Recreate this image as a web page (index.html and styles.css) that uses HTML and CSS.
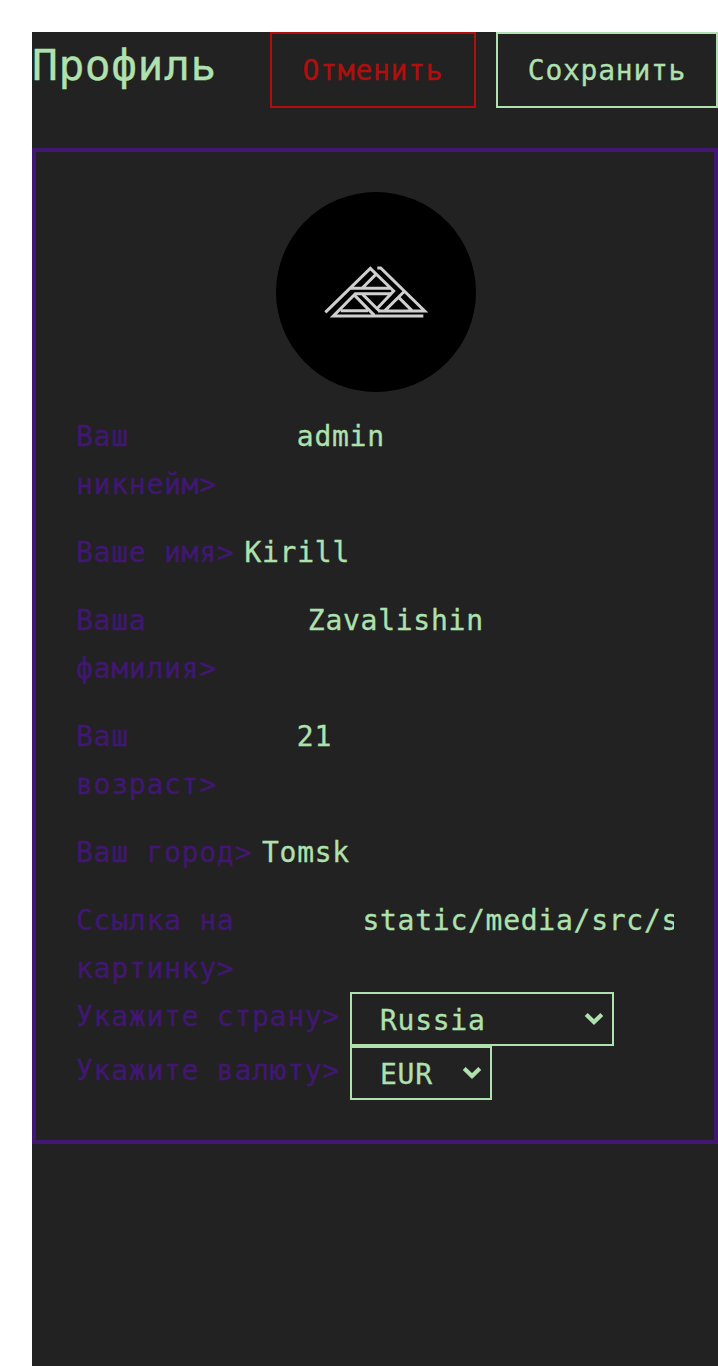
FILE: index.html
```html
<!DOCTYPE html>
<html lang="ru">
<head>
<meta charset="utf-8">
<title>Профиль</title>
<link rel="stylesheet" href="styles.css">
</head>
<body>
<main class="page">
  <header class="header">
    <h1 class="title">Профиль</h1>
    <div class="actions">
      <button class="btn btn-cancel">Отменить</button>
      <button class="btn btn-save">Сохранить</button>
    </div>
  </header>
  <section class="card">
    <svg class="avatar" viewBox="276 192 200 200" aria-label="avatar">
      <circle cx="376" cy="292" r="100" fill="#000"/>
      <g transform="translate(310 250) scale(.33333)" fill="none" stroke="#cfcfcf" stroke-width="9">
        <path d="M46 187L181 55L251 123L200 177"/>
        <path d="M197 74L157 114M122 115H241M245 131H136L70 198H340"/>
        <path d="M134 136L193 196M158 133L208 183M92 182H174"/>
        <path d="M202 54H212L344 183H204M281 126L225 182M266 142L306 182"/>
      </g>
    </svg>
    <div class="fields">
      <div class="field"><span class="label">Ваш<br>никнейм&gt;</span><span class="value after-wide">admin</span></div>
      <div class="field"><span class="label">Ваше имя&gt;</span><span class="value">Kirill</span></div>
      <div class="field"><span class="label">Ваша<br>фамилия&gt;</span><span class="value after-wider">Zavalishin</span></div>
      <div class="field"><span class="label">Ваш<br>возраст&gt;</span><span class="value after-wide">21</span></div>
      <div class="field"><span class="label">Ваш город&gt;</span><span class="value">Tomsk</span></div>
      <div class="field"><span class="label">Ссылка на<br>картинку&gt;</span><span class="value after-link">static/media/src/s</span></div>
    </div>
    <div class="choice"><span class="label">Укажите страну&gt;</span><div class="select select-country"><span>Russia</span><svg class="chevron" viewBox="0 0 20 14"><path d="M2.2 2.5L10 10L17.8 2.5"/></svg></div></div>
    <div class="choice"><span class="label">Укажите валюту&gt;</span><div class="select select-currency"><span>EUR</span><svg class="chevron" viewBox="0 0 20 14"><path d="M2.2 2.5L10 10L17.8 2.5"/></svg></div></div>
  </section>
</main>
</body>
</html>
```
FILE: styles.css
```css
* { box-sizing: border-box; }
body { margin: 0; background: #fff; }
.page { margin: 32px 0 0 32px; height: 1334px; background: #222; color: #afe1af; font: 28px/48px "DejaVu Sans Mono", monospace; letter-spacing: .74px; overflow: hidden; -webkit-text-stroke: .3px; }
.header { display: flex; justify-content: space-between; height: 76px; margin-bottom: 40px; }
.title { margin: 0; font-size: 43px; font-weight: 400; line-height: 66px; letter-spacing: .51px; }
.actions { display: flex; gap: 20px; }
.btn { height: 76px; padding: 2px 0 0; border: 2px solid; background: none; font: inherit; letter-spacing: inherit; white-space: nowrap; }
.btn-cancel { width: 206px; color: #b20e0e; }
.btn-save { width: 222px; color: #afe1af; }
.card { height: 996px; padding: 40px; border: 4px solid #411773; }
.avatar { display: block; width: 200px; height: 200px; margin: 0 auto 20px 200px; }
.fields { display: flex; flex-direction: column; gap: 20px; }
.field, .choice { display: flex; align-items: flex-start; white-space: nowrap; }
.field { margin-bottom: -1px; padding-top: 1px; }
.choice .label { padding-top: 1px; }
.label { color: #411773; }
.value { flex: 1; min-width: 0; margin-left: 10px; overflow: hidden; }
.after-wide { margin-left: 80px; }
.after-wider { margin-left: 91px; }
.after-link { margin-left: 128px; }
.select { display: flex; align-items: center; justify-content: space-between; height: 54px; margin-left: 10px; padding: 4px 8px 0 28px; border: 2px solid; }
.select-country { width: 264px; }
.select-currency { width: 142px; }
.chevron { width: 20px; height: 14px; margin-bottom: 4px; fill: none; stroke: currentColor; stroke-width: 4.2; }
```
